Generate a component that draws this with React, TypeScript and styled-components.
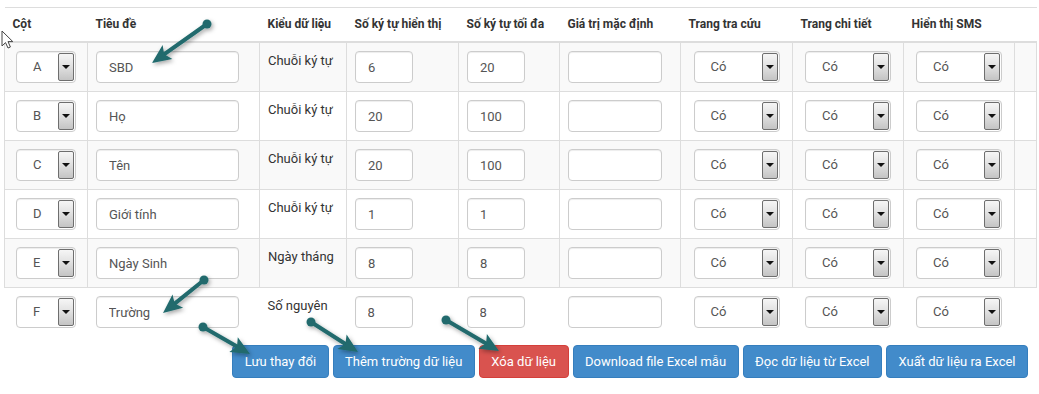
import React from "react";
import styled, { createGlobalStyle } from "styled-components";

const GlobalStyle = createGlobalStyle`
  html, body { margin: 0; padding: 0; background: #fff; }
  body { font-family: Roboto, "Liberation Sans", Arial, sans-serif; color: #333; }
  * { box-sizing: border-box; }
`;

const Page = styled.div`
  position: relative;
  width: 1039px;
  height: 394px;
  overflow: hidden;
  padding: 7px 0 0 4px;
`;

const Table = styled.table`
  width: 1032px;
  table-layout: fixed;
  border-collapse: collapse;
  border-spacing: 0;
`;

const HeadCell = styled.th`
  text-align: left;
  padding: 8px;
  font-size: 12px;
  font-weight: 700;
  line-height: 17px;
  color: #333;
  white-space: nowrap;
  border-top: 1px solid #ddd;
  border-bottom: 2px solid #ddd;
`;

const Row = styled.tr<{ $striped?: boolean }>`
  background: ${(p) => (p.$striped ? "#f9f9f9" : "#fff")};
`;

const Cell = styled.td<{ $center?: boolean; $plain?: boolean }>`
  padding: 8px;
  vertical-align: top;
  font-size: 13px;
  line-height: 20px;
  color: #333;
  white-space: nowrap;
  border: ${(p) => (p.$plain ? "none" : "1px solid #ddd")};
  & > * {
    margin: ${(p) => (p.$center ? "0 auto" : "0")};
  }
`;

const TextInput = styled.input<{ $w: number }>`
  display: block;
  width: ${(p) => p.$w}px;
  height: 32px;
  padding: 0 12px;
  border: 1px solid #ccc;
  border-radius: 4px;
  background: #fff;
  font-family: Roboto, "Liberation Sans", Arial, sans-serif;
  font-size: 13px;
  color: #555;
  box-shadow: inset 0 1px 1px rgba(0, 0, 0, 0.075);
  outline: none;
`;

const SelectBox = styled.div<{ $w: number }>`
  display: flex;
  align-items: stretch;
  width: ${(p) => p.$w}px;
  height: 32px;
  padding: 1px;
  border: 1px solid #ccc;
  border-radius: 4px;
  background: #fff;
  box-shadow: inset 0 1px 1px rgba(0, 0, 0, 0.075);
`;

const SelectValue = styled.span`
  flex: 1;
  padding-left: 15px;
  font-size: 13px;
  line-height: 28px;
  color: #555;
`;

const ArrowBox = styled.span`
  width: 16px;
  display: flex;
  align-items: center;
  justify-content: center;
  border: 1px solid #6e6e6e;
  border-radius: 2px;
  background: linear-gradient(#f6f6f6, #e2e2e2 45%, #c4c4c4);
  &::after {
    content: "";
    width: 0;
    height: 0;
    border-left: 4px solid transparent;
    border-right: 4px solid transparent;
    border-top: 4px solid #111;
  }
`;

const ButtonBar = styled.div`
  width: 1032px;
  display: flex;
  justify-content: flex-end;
  gap: 4px;
  margin-top: 9px;
  padding-right: 8px;
`;

const Button = styled.button<{ $variant?: "primary" | "danger" }>`
  height: 33px;
  padding: 0 11.5px;
  border-radius: 4px;
  border: 1px solid ${(p) => (p.$variant === "danger" ? "#d43f3a" : "#357ebd")};
  background: ${(p) => (p.$variant === "danger" ? "#d9534f" : "#428bca")};
  color: #fff;
  font-family: Roboto, "Liberation Sans", Arial, sans-serif;
  font-size: 13px;
  white-space: nowrap;
  cursor: pointer;
`;

const Overlay = styled.svg`
  position: absolute;
  left: 0;
  top: 0;
  width: 1039px;
  height: 394px;
  pointer-events: none;
`;

const Cursor = styled.svg`
  position: absolute;
  left: 1px;
  top: 30px;
  width: 13px;
  height: 19px;
  pointer-events: none;
`;

type RowData = {
  col: string;
  title: string;
  type: string;
  show: string;
  max: string;
};

const rows: RowData[] = [
  { col: "A", title: "SBD", type: "Chuỗi ký tự", show: "6", max: "20" },
  { col: "B", title: "Họ", type: "Chuỗi ký tự", show: "20", max: "100" },
  { col: "C", title: "Tên", type: "Chuỗi ký tự", show: "20", max: "100" },
  { col: "D", title: "Giới tính", type: "Chuỗi ký tự", show: "1", max: "1" },
  { col: "E", title: "Ngày Sinh", type: "Ngày tháng", show: "8", max: "8" },
  { col: "F", title: "Trường", type: "Số nguyên", show: "8", max: "8" },
];

const headers = [
  "Cột",
  "Tiêu đề",
  "Kiểu dữ liệu",
  "Số ký tự hiển thị",
  "Số ký tự tối đa",
  "Giá trị mặc định",
  "Trang tra cứu",
  "Trang chi tiết",
  "Hiển thị SMS",
  "",
];

const colWidths = [83, 172, 87, 112, 101, 121, 112, 111, 111, 22];

const Select = ({ value, w }: { value: string; w: number }) => (
  <SelectBox $w={w}>
    <SelectValue>{value}</SelectValue>
    <ArrowBox />
  </SelectBox>
);

const arrows: [number, number, number, number][] = [
  [207, 24, 152, 63],
  [204, 280, 163, 313],
  [203, 327, 250, 354],
  [311, 322, 358, 352],
  [446, 320, 499, 351],
];

const Arrow = ({ a }: { a: [number, number, number, number] }) => {
  const [x1, y1, x2, y2] = a;
  const dx = x2 - x1;
  const dy = y2 - y1;
  const len = Math.hypot(dx, dy);
  const ux = dx / len;
  const uy = dy / len;
  const L = 19;
  const W = 8.5;
  const bx = x2 - ux * L;
  const by = y2 - uy * L;
  const px = -uy;
  const py = ux;
  const nx = bx + ux * 4;
  const ny = by + uy * 4;
  const pts = [
    [x2, y2],
    [bx + px * W, by + py * W],
    [nx, ny],
    [bx - px * W, by - py * W],
  ]
    .map((p) => p.map((v) => v.toFixed(1)).join(","))
    .join(" ");
  return (
    <g filter="url(#shadow)">
      <line
        x1={x1}
        y1={y1}
        x2={nx + ux * 2}
        y2={ny + uy * 2}
        stroke="#206b6d"
        strokeWidth={4}
        strokeLinecap="round"
      />
      <circle cx={x1} cy={y1} r={4.5} fill="#206b6d" />
      <polygon points={pts} fill="#206b6d" />
    </g>
  );
};

export default function App() {
  return (
    <>
      <GlobalStyle />
      <Page>
        <Table>
          <colgroup>
            {colWidths.map((w, i) => (
              <col key={i} style={{ width: w }} />
            ))}
          </colgroup>
          <thead>
            <tr>
              {headers.map((h, i) => (
                <HeadCell key={i}>{h}</HeadCell>
              ))}
            </tr>
          </thead>
          <tbody>
            {rows.map((r, i) => {
              const plain = i === rows.length - 1;
              return (
                <Row key={r.col} $striped={i % 2 === 0 && !plain}>
                  <Cell $center $plain={plain}>
                    <Select value={r.col} w={60} />
                  </Cell>
                  <Cell $plain={plain}>
                    <TextInput $w={143} defaultValue={r.title} />
                  </Cell>
                  <Cell $plain={plain}>{r.type}</Cell>
                  <Cell $plain={plain}>
                    <TextInput $w={58} defaultValue={r.show} />
                  </Cell>
                  <Cell $plain={plain}>
                    <TextInput $w={58} defaultValue={r.max} />
                  </Cell>
                  <Cell $plain={plain}>
                    <TextInput $w={94} defaultValue="" />
                  </Cell>
                  <Cell $center $plain={plain}>
                    <Select value="Có" w={86} />
                  </Cell>
                  <Cell $center $plain={plain}>
                    <Select value="Có" w={86} />
                  </Cell>
                  <Cell $center $plain={plain}>
                    <Select value="Có" w={86} />
                  </Cell>
                  <Cell $plain={plain} />
                </Row>
              );
            })}
          </tbody>
        </Table>
        <ButtonBar>
          <Button $variant="primary">Lưu thay đổi</Button>
          <Button $variant="primary">Thêm trường dữ liệu</Button>
          <Button $variant="danger">Xóa dữ liệu</Button>
          <Button $variant="primary">Download file Excel mẫu</Button>
          <Button $variant="primary">Đọc dữ liệu từ Excel</Button>
          <Button $variant="primary">Xuất dữ liệu ra Excel</Button>
        </ButtonBar>
        <Overlay viewBox="0 0 1039 394">
          <defs>
            <filter id="shadow" x="-20%" y="-20%" width="160%" height="160%">
              <feDropShadow dx="1.5" dy="2" stdDeviation="2" floodColor="#000" floodOpacity="0.35" />
            </filter>
          </defs>
          {arrows.map((a, i) => (
            <Arrow key={i} a={a} />
          ))}
        </Overlay>
        <Cursor viewBox="0 0 13 19">
          <path
            d="M1 1 L1 16 L4.5 12.6 L7 18 L9.4 17 L7 11.6 L11.8 11.6 Z"
            fill="#fff"
            stroke="#444"
            strokeWidth="1"
            strokeLinejoin="round"
          />
        </Cursor>
      </Page>
    </>
  );
}
